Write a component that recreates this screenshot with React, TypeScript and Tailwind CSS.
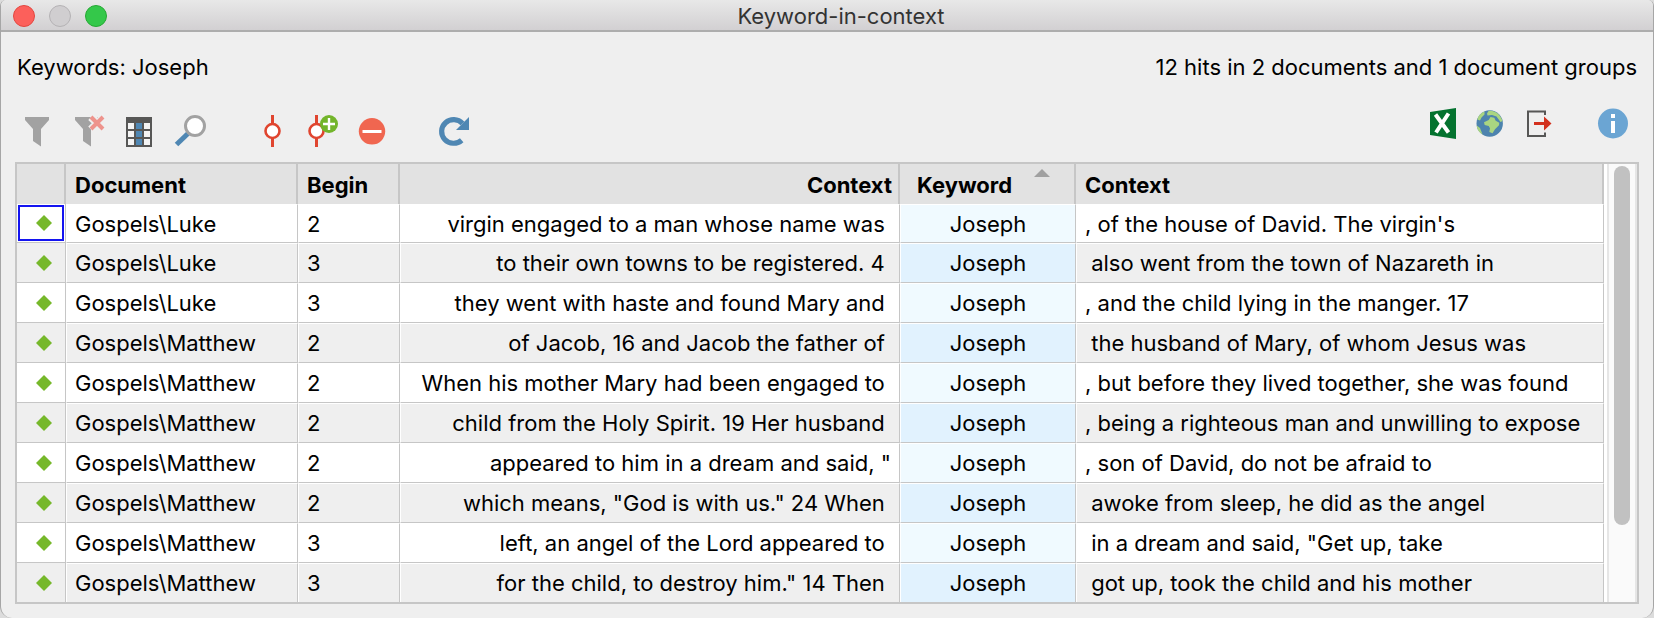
import { useState } from "react";
import type { ReactNode } from "react";

type Hit = {
  document: string;
  begin: number;
  before: string;
  keyword: string;
  after: string;
};

const hits: Hit[] = [
  { document: "Gospels\\Luke", begin: 2, before: "virgin engaged to a man whose name was ", keyword: "Joseph", after: ", of the house of David. The virgin's" },
  { document: "Gospels\\Luke", begin: 3, before: "to their own towns to be registered. 4 ", keyword: "Joseph", after: " also went from the town of Nazareth in" },
  { document: "Gospels\\Luke", begin: 3, before: "they went with haste and found Mary and ", keyword: "Joseph", after: ", and the child lying in the manger. 17" },
  { document: "Gospels\\Matthew", begin: 2, before: "of Jacob, 16 and Jacob the father of ", keyword: "Joseph", after: " the husband of Mary, of whom Jesus was" },
  { document: "Gospels\\Matthew", begin: 2, before: "When his mother Mary had been engaged to ", keyword: "Joseph", after: ", but before they lived together, she was found" },
  { document: "Gospels\\Matthew", begin: 2, before: "child from the Holy Spirit. 19 Her husband ", keyword: "Joseph", after: ", being a righteous man and unwilling to expose" },
  { document: "Gospels\\Matthew", begin: 2, before: "appeared to him in a dream and said, \"", keyword: "Joseph", after: ", son of David, do not be afraid to" },
  { document: "Gospels\\Matthew", begin: 2, before: "which means, \"God is with us.\" 24 When ", keyword: "Joseph", after: " awoke from sleep, he did as the angel" },
  { document: "Gospels\\Matthew", begin: 3, before: "left, an angel of the Lord appeared to ", keyword: "Joseph", after: " in a dream and said, \"Get up, take" },
  { document: "Gospels\\Matthew", begin: 3, before: "for the child, to destroy him.\" 14 Then ", keyword: "Joseph", after: " got up, took the child and his mother" },
];

const th = "h-10 border-r-2 border-[#c6c6c6] bg-[#e2e2e2] pt-0.5 pr-1.5 pb-0 pl-[9px] font-bold";
const td = "border-b border-r border-b-[#c6c6c6] border-r-[#c6c6c6] border-l border-t border-l-white border-t-white px-2 py-0 whitespace-pre overflow-hidden group-last:border-b-0";

function ToolButton({ label, wide, children }: { label: string; wide?: boolean; children: ReactNode }) {
  return (
    <button type="button" aria-label={label} className="block shrink-0">
      <svg width={wide ? 50 : 48} height="40" viewBox={wide ? "0 0 50 40" : "0 0 48 40"} fill="none">
        {children}
      </svg>
    </button>
  );
}

function LeftTools() {
  return (
    <div className="flex pt-2">
      <ToolButton label="Filter" wide>
        <path d="M13 5H37V8L29 17V34.5L21 29V17L13 8Z" fill="#a2a2a2" />
      </ToolButton>
      <ToolButton label="Reset filter" wide>
        <path d="M13 5H37V8L29 17V34.5L21 29V17L13 8Z" fill="#a2a2a2" />
        <path d="M29 5L42 17.500M42 5L29 17.500" stroke="#efefef" strokeWidth="8" />
        <path d="M31 2H46V5H31Z" fill="#efefef" />
        <path d="M29 5L41 17M41 5L29 17" stroke="#ee938c" strokeWidth="4" />
      </ToolButton>
      <ToolButton label="Select columns" wide>
        <path d="M14 5H40V35H14Z" fill="#575756" />
        <path d="M16 11h6v6h-6zM32 11h6v6h-6zM16 19h6v6h-6zM32 19h6v6h-6zM16 27h6v6h-6zM32 27h6v6h-6z" fill="#f4f4f4" />
        <path d="M24 11h6v6h-6zM24 19h6v6h-6zM24 27h6v6h-6z" fill="#4f87b3" />
      </ToolButton>
      <ToolButton label="Search" wide>
        <path d="M14.500 32.500L26 21.500" stroke="#4f87b3" strokeWidth="5" />
        <circle cx="33" cy="14" r="9.500" fill="#fff" stroke="#a2a2a2" strokeWidth="3" />
      </ToolButton>
      <div className="w-[35px]" />
      <ToolButton label="Autocode" wide>
        <path d="M25.500 3V35" stroke="#e0452f" strokeWidth="3" />
        <circle cx="25.500" cy="19" r="7" fill="#fff" stroke="#e0452f" strokeWidth="2.600" />
      </ToolButton>
      <ToolButton label="Autocode with new code" wide>
        <path d="M19.500 3V35" stroke="#e0452f" strokeWidth="3" />
        <circle cx="19.500" cy="19" r="7" fill="#fff" stroke="#e0452f" strokeWidth="2.600" />
        <circle cx="32" cy="12" r="9" fill="#73b52b" />
        <path d="M32 6V18M26 12H38" stroke="#fff" strokeWidth="2.400" />
      </ToolButton>
      <ToolButton label="Exclude hit" wide>
        <circle cx="25" cy="19.300" r="13.200" fill="#f06650" />
        <path d="M15.500 19.500H34.500" stroke="#fff" strokeWidth="3" />
      </ToolButton>
      <div className="w-8" />
      <ToolButton label="Refresh" wide>
        <path d="M33.500 11.500A12 11.800 0 1 0 32.700 28.200" stroke="#4f87b3" strokeWidth="5.200" />
        <path d="M40 5V18H27Z" fill="#4f87b3" />
      </ToolButton>
    </div>
  );
}

function RightTools() {
  return (
    <div className="flex">
      <ToolButton label="Open as Excel table">
        <path d="M11 8L37 4V35L11 31Z" fill="#04732f" />
        <path d="M16.500 10.500L29.500 28.500M29.500 9.500L17 28.500" stroke="#fff" strokeWidth="4" />
      </ToolButton>
      <ToolButton label="Open as website">
        <circle cx="22.700" cy="19.500" r="13.200" fill="#4d83ae" />
        <path d="M10.200 15.500C11.500 11.500 14 8.700 17.500 7.500L17.500 10.500L14.500 13.500L13 16.500Z" fill="#aad581" />
        <path d="M20 9.500L21.500 7C27 6 33 9.500 35.500 17L33.500 18L29.500 12.500L25 11L20.500 11.500Z" fill="#aad581" />
        <path d="M17 18.300L21.700 16L23.500 13L27.300 13.700L28.700 16.700L32.300 18.700L32 21.300L28 25.300L25.500 29.300L22.300 28L23 24.300L21.700 22L17.700 21Z" fill="#aad581" />
        <path d="M9.700 21.500L13 24L15.500 30.500C12 28.500 10 25.500 9.700 21.500Z" fill="#aad581" />
      </ToolButton>
      <ToolButton label="Export">
        <path d="M30 11V7.500H13V32H30V28.500" stroke="#575756" strokeWidth="2" />
        <path d="M19 18H29V12.500L36.500 19.500L29 26.500V21H19Z" fill="#d3311e" />
      </ToolButton>
      <div className="w-[26px]" />
      <ToolButton label="Info">
        <circle cx="24" cy="19.500" r="15" fill="#6ba5d3" />
        <path d="M22 10H26V14H22ZM22 17H26V29H22Z" fill="#fff" />
      </ToolButton>
    </div>
  );
}

export default function App() {
  const [selected, setSelected] = useState(0);

  return (
    <div className="bg-[#dcdcdc]">
      <div className="overflow-hidden rounded-t-md rounded-b-xl border-x border-[#a6a6a6] bg-[#efefef] pb-3.5 font-['Inter',sans-serif] text-[22px] leading-7 text-black">
        {/* Title bar */}
        <header className="relative flex h-8 items-center justify-center border-b-2 border-[#adadad] bg-linear-to-b from-[#e8e8e8] to-[#d2d0d2] pt-0.5 pl-7">
          <div className="absolute top-[5px] left-3 flex gap-3.5">
            <button type="button" aria-label="Close" className="size-[22px] rounded-full border border-[#e2463f] bg-[#fc605b]" />
            <button type="button" aria-label="Minimize" className="size-[22px] rounded-full border border-[#b4b2b4] bg-[#d0ced0]" />
            <button type="button" aria-label="Zoom" className="size-[22px] rounded-full border border-[#25a833] bg-[#34c84a]" />
          </div>
          <h1 className="text-[#333]">Keyword-in-context</h1>
        </header>

        {/* Summary */}
        <div className="flex justify-between px-4 pt-[21px] pb-[23px]">
          <p>Keywords: Joseph</p>
          <p>12 hits in 2 documents and 1 document groups</p>
        </div>

        {/* Toolbar */}
        <div className="flex items-start justify-between pr-4 pb-2.5 pl-[11px]">
          <LeftTools />
          <RightTools />
        </div>

        {/* Result table */}
        <div className="mx-3.5 flex border-2 border-[#c6c6c6] bg-white">
          <table className="min-w-0 flex-1 table-fixed border-separate border-spacing-0">
            <colgroup>
              <col className="w-[49px]" />
              <col className="w-[232px]" />
              <col className="w-[102px]" />
              <col className="w-[500px]" />
              <col className="w-[176px]" />
              <col />
            </colgroup>
            <thead>
              <tr>
                <th className={th} />
                <th className={`${th} text-left`}>Document</th>
                <th className={`${th} text-left`}>Begin</th>
                <th className={`${th} text-right`}>Context</th>
                <th className={`${th} relative text-left`}>
                  <span className="pl-2">Keyword</span>
                  <svg className="absolute top-[5px] right-6" width="16" height="8" viewBox="0 0 16 8">
                    <path d="M0 8L8 0L16 8Z" fill="#a0a0a0" />
                  </svg>
                </th>
                <th className={`${th} text-left`}>Context</th>
              </tr>
            </thead>
            <tbody>
              {hits.map((hit, i) => (
                <tr
                  key={i}
                  className={`group h-10 first:h-[39px] last:h-[39px] ${i % 2 ? "bg-[#efefef]" : "bg-white"}`}
                  onClick={() => setSelected(i)}
                >
                  <td className="border-r border-b border-[#c6c6c6] p-px group-last:border-b-0">
                    <div className={`flex h-9 items-center justify-center border-2 pl-1.5 ${i === selected ? "border-[#1414f0]" : "border-transparent"}`}>
                      <svg width="16" height="16" viewBox="0 0 16 16">
                        <path d="M8 0L16 8L8 16L0 8Z" fill="#76b82a" />
                      </svg>
                    </div>
                  </td>
                  <td className={td}>{hit.document}</td>
                  <td className={td}>{hit.begin}</td>
                  <td className={`${td} text-right`}>{hit.before}</td>
                  <td className={`${td} text-center ${i % 2 ? "bg-[#e1f2fe]" : "bg-[#f0faff]"}`}>{hit.keyword}</td>
                  <td className={td}>{hit.after}</td>
                </tr>
              ))}
            </tbody>
          </table>
          {/* Scrollbar */}
          <div className="ml-[3px] w-[30px] shrink-0 border-x-2 border-[#e6e6e6] bg-[#fafafa] px-[5px] py-0.5">
            <div className="h-[359px] w-4 rounded-full bg-[#c1c1c1]" />
          </div>
        </div>
      </div>
    </div>
  );
}
